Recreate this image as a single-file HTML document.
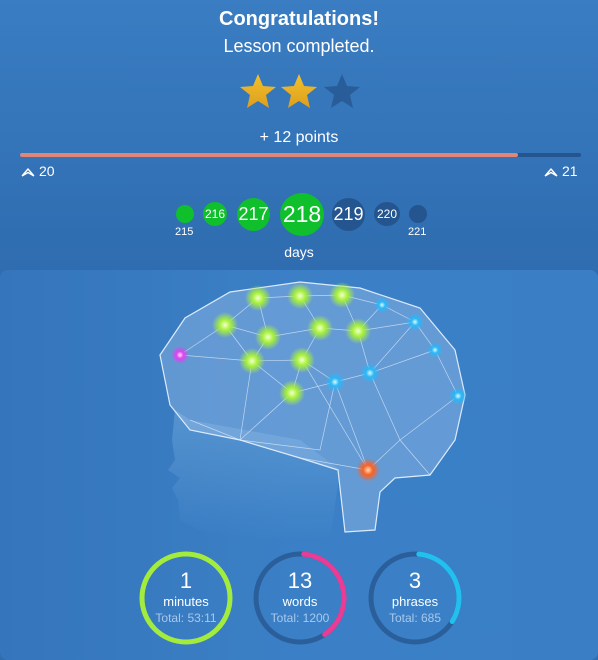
<!DOCTYPE html>
<html><head><meta charset="utf-8"><style>
body{margin:0;width:598px;height:654px;overflow:hidden;background:#2f6db0;font-family:"Liberation Sans",sans-serif;color:#fff;position:relative}
.c{position:absolute;left:0;width:598px;text-align:center}
.panel{position:absolute;left:0;top:270px;width:598px;height:390px;border-radius:8px;background:linear-gradient(90deg,#3575bb,#3b80c6 50%,#3a7fc5);}
.b{position:absolute;border-radius:50%;display:flex;align-items:center;justify-content:center;color:#fff}
.g{background:#0fbf2c}.d{background:#24558e}
.sm{position:absolute;font-size:11px}
</style></head><body>
<div style="position:absolute;left:0;top:0;width:598px;height:270px;background:linear-gradient(#3a7dc2,#2f6cb0)"></div>
<div class="c" style="top:8px;font-size:20px;font-weight:bold">Congratulations!</div>
<div class="c" style="top:36px;font-size:18px">Lesson completed.</div>
<svg style="position:absolute;left:238px;top:72px" width="126" height="40" viewBox="0 0 126 40">
<defs><linearGradient id="sg" x1="0" y1="0" x2="0" y2="1"><stop offset="0" stop-color="#f3c12c"/><stop offset="1" stop-color="#dd9e1d"/></linearGradient></defs>
<polygon points="20,2 25,14 38,15 28,23 31,36 20,29 9,36 12,23 2,15 15,14" fill="url(#sg)"/>
<polygon transform="translate(41,0)" points="20,2 25,14 38,15 28,23 31,36 20,29 9,36 12,23 2,15 15,14" fill="url(#sg)"/>
<polygon transform="translate(84,0)" points="20,2 25,14 38,15 28,23 31,36 20,29 9,36 12,23 2,15 15,14" fill="#285d9a"/>
</svg>
<div class="c" style="top:129px;font-size:16px">+ 12 points</div>
<div style="position:absolute;left:20px;top:153px;width:561px;height:4px;background:#24558e;border-radius:2px"></div>
<div style="position:absolute;left:20px;top:153px;width:498px;height:4px;background:#e08676;border-radius:2px"></div>
<svg style="position:absolute;left:20px;top:166px" width="16" height="12"><path d="M2,10 L8,3 L14,10 M2,10 L8,6.5 L14,10" stroke="#fff" stroke-width="1.4" fill="none" stroke-linejoin="round"/></svg>
<div style="position:absolute;left:39px;top:163px;font-size:14px">20</div>
<svg style="position:absolute;left:543px;top:166px" width="16" height="12"><path d="M2,10 L8,3 L14,10 M2,10 L8,6.5 L14,10" stroke="#fff" stroke-width="1.4" fill="none" stroke-linejoin="round"/></svg>
<div style="position:absolute;left:562px;top:163px;font-size:14px">21</div>
<div class="b g" style="left:176px;top:205px;width:18px;height:18px"></div>
<div class="sm" style="left:175px;top:226px">215</div>
<div class="b g" style="left:203px;top:202px;width:24px;height:24px;font-size:12px">216</div>
<div class="b g" style="left:237px;top:198px;width:33px;height:33px;font-size:18px">217</div>
<div class="b g" style="left:280px;top:193px;width:44px;height:43px;font-size:23px">218</div>
<div class="b d" style="left:332px;top:198px;width:33px;height:33px;font-size:18px">219</div>
<div class="b d" style="left:374px;top:202px;width:26px;height:24px;font-size:12px">220</div>
<div class="b d" style="left:409px;top:205px;width:18px;height:18px"></div>
<div class="sm" style="left:408px;top:226px">221</div>
<div class="c" style="top:244px;font-size:14px">days</div>
<div class="panel"></div>
<svg style="position:absolute;left:0;top:270px" width="598" height="290" viewBox="0 270 598 290">
<defs>
<radialGradient id="gG"><stop offset="0" stop-color="#f4ffd0"/><stop offset="0.4" stop-color="#a8f23a"/><stop offset="1" stop-color="#a8f23a" stop-opacity="0"/></radialGradient>
<radialGradient id="gB"><stop offset="0" stop-color="#e0f8ff"/><stop offset="0.4" stop-color="#28b8f8"/><stop offset="1" stop-color="#28b8f8" stop-opacity="0"/></radialGradient>
<radialGradient id="gP"><stop offset="0" stop-color="#ffe0ff"/><stop offset="0.4" stop-color="#e040f0"/><stop offset="1" stop-color="#e040f0" stop-opacity="0"/></radialGradient>
<radialGradient id="gO"><stop offset="0" stop-color="#ffe0c0"/><stop offset="0.4" stop-color="#ff6020"/><stop offset="1" stop-color="#ff6020" stop-opacity="0"/></radialGradient>
<linearGradient id="hd" x1="0" y1="0" x2="0" y2="1"><stop offset="0" stop-color="#8cc0ea" stop-opacity=".35"/><stop offset="1" stop-color="#8cc0ea" stop-opacity="0"/></linearGradient></defs>
<path d="M175,410 L172,440 L175,460 L168,470 L180,478 L172,488 L178,500 L180,520 L200,530 L250,540 L330,540 L340,470 L300,440 L190,420Z" fill="url(#hd)"/>
<path d="M160,355 L185,318 L230,292 L300,282 L360,288 L420,308 L455,350 L465,395 L455,440 L430,475 L395,478 L380,492 L375,530 L345,532 L338,470 L300,458 L240,440 L190,430 L170,405Z" fill="#a8c8f0" fill-opacity=".38" stroke="#dcebfb" stroke-width="1.2"/>
<g stroke="#e6f0fc" stroke-width=".7" fill="none" opacity=".7">
<path d="M225,325 L258,298 L300,296 L342,295 L382,305 L415,322 L435,350 L458,396"/>
<path d="M180,355 L225,325 L268,337 L320,328 L358,331 L415,322"/>
<path d="M180,355 L252,361 L302,360 L335,382 L370,373 L435,350"/>
<path d="M190,420 L240,440 L292,393 L335,382 L368,470 L400,440 L458,396"/>
<path d="M258,298 L268,337 L252,361 L292,393 L302,360 L320,328 L300,296 M342,295 L358,331 L370,373 L400,440 L430,475 M225,325 L252,361 L240,440 M302,360 L368,470 L300,458 M335,382 L320,450 L240,440 M382,305 L358,331 M415,322 L370,373"/>
</g>
<g>
<circle cx="258" cy="298" r="13" fill="url(#gG)"/><circle cx="300" cy="296" r="13" fill="url(#gG)"/>
<circle cx="342" cy="295" r="13" fill="url(#gG)"/><circle cx="225" cy="325" r="13" fill="url(#gG)"/>
<circle cx="268" cy="337" r="13" fill="url(#gG)"/><circle cx="320" cy="328" r="13" fill="url(#gG)"/>
<circle cx="358" cy="331" r="13" fill="url(#gG)"/><circle cx="252" cy="361" r="13" fill="url(#gG)"/>
<circle cx="302" cy="360" r="13" fill="url(#gG)"/><circle cx="292" cy="393" r="13" fill="url(#gG)"/>
<circle cx="382" cy="305" r="8" fill="url(#gB)"/><circle cx="415" cy="322" r="9" fill="url(#gB)"/>
<circle cx="435" cy="350" r="8" fill="url(#gB)"/><circle cx="370" cy="373" r="10" fill="url(#gB)"/>
<circle cx="335" cy="382" r="10" fill="url(#gB)"/><circle cx="458" cy="396" r="9" fill="url(#gB)"/>
<circle cx="180" cy="355" r="9" fill="url(#gP)"/><circle cx="368" cy="470" r="12" fill="url(#gO)"/>
</g>
</svg>
<svg style="position:absolute;left:130px;top:545px" width="340" height="109" viewBox="130 545 340 109">
<circle cx="186" cy="598" r="44" fill="none" stroke="#a3ec3d" stroke-width="5"/>
<circle cx="300" cy="598" r="44" fill="none" stroke="#2a5f9b" stroke-width="5"/>
<circle cx="300" cy="598" r="44" fill="none" stroke="#ea3b95" stroke-width="5" stroke-linecap="round" stroke-dasharray="108 300" transform="rotate(-85 300 598)"/>
<circle cx="415" cy="598" r="44" fill="none" stroke="#2a5f9b" stroke-width="5"/>
<circle cx="415" cy="598" r="44" fill="none" stroke="#22c0ee" stroke-width="5" stroke-linecap="round" stroke-dasharray="90 300" transform="rotate(-85 415 598)"/>
</svg>
<div style="position:absolute;left:136px;top:570px;width:100px;text-align:center;line-height:1">
<div style="font-size:22px">1</div><div style="font-size:13px;margin-top:3px">minutes</div><div style="font-size:12px;color:#a9c8ec;margin-top:4px">Total: 53:11</div></div>
<div style="position:absolute;left:250px;top:570px;width:100px;text-align:center;line-height:1">
<div style="font-size:22px">13</div><div style="font-size:13px;margin-top:3px">words</div><div style="font-size:12px;color:#a9c8ec;margin-top:4px">Total: 1200</div></div>
<div style="position:absolute;left:365px;top:570px;width:100px;text-align:center;line-height:1">
<div style="font-size:22px">3</div><div style="font-size:13px;margin-top:3px">phrases</div><div style="font-size:12px;color:#a9c8ec;margin-top:4px">Total: 685</div></div>
</body></html>
